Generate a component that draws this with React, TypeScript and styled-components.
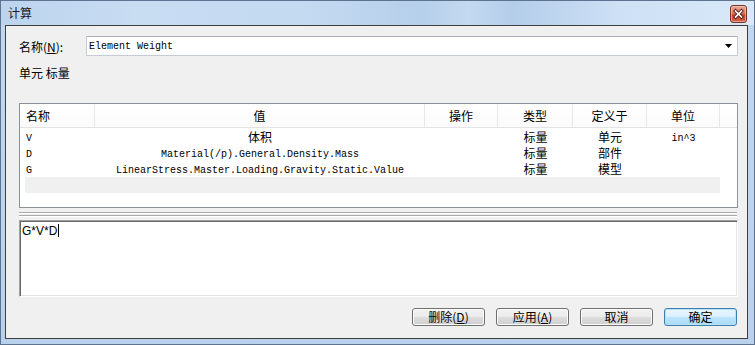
import styled, { createGlobalStyle } from 'styled-components';

const GlobalStyle = createGlobalStyle`
  * { box-sizing: border-box; }
  html, body { margin: 0; padding: 0; background: #fff; }
  body {
    font-family: "Noto Sans CJK SC", "Liberation Sans", sans-serif;
    font-size: 12px;
    color: #000;
  }
`;

type Row = {
  name: string;
  value: string;
  valueMono: boolean;
  op: string;
  kind: string;
  scope: string;
  unit: string;
};

const rows: Row[] = [
  { name: 'V', value: '体积', valueMono: false, op: '', kind: '标量', scope: '单元', unit: 'in^3' },
  { name: 'D', value: 'Material(/p).General.Density.Mass', valueMono: true, op: '', kind: '标量', scope: '部件', unit: '' },
  { name: 'G', value: 'LinearStress.Master.Loading.Gravity.Static.Value', valueMono: true, op: '', kind: '标量', scope: '模型', unit: '' },
];

const headers = ['名称', '值', '操作', '类型', '定义于', '单位'];

const App = () => {
  return (
    <>
      <GlobalStyle />
      <Window>
        <TitleBar>
          <Title>计算</Title>
          <CloseButton>
            <svg width="15" height="16" viewBox="0 0 15 16">
              <path d="M4.5 5 L10.5 11 M10.5 5 L4.5 11" stroke="#5a1a10" strokeWidth="3.4" strokeLinecap="square" />
              <path d="M4.5 5 L10.5 11 M10.5 5 L4.5 11" stroke="#fff" strokeWidth="1.6" strokeLinecap="square" />
            </svg>
          </CloseButton>
        </TitleBar>
        <Content>
          <NameRow>
            <Label>
              名称(<Key>N</Key>):
            </Label>
            <Combo>
              <ComboText>Element Weight</ComboText>
              <svg width="7" height="4" viewBox="0 0 7 4">
                <path d="M0 0 H7 L3.5 4 Z" fill="#000" />
              </svg>
            </Combo>
          </NameRow>
          <Info>单元 标量</Info>
          <Table>
            <Header>
              {headers.map((h, i) => (
                <HeaderCell key={h} $left={i === 0}>
                  {h}
                </HeaderCell>
              ))}
              <HeaderCell $left={false} />
            </Header>
            <Body>
              {rows.map((r) => (
                <BodyRow key={r.name} $shade={false}>
                  <Cell $mono $left>
                    {r.name}
                  </Cell>
                  <Cell $mono={r.valueMono} $left={false}>
                    {r.value}
                  </Cell>
                  <Cell $mono={false} $left={false}>
                    {r.op}
                  </Cell>
                  <Cell $mono={false} $left={false}>
                    {r.kind}
                  </Cell>
                  <Cell $mono={false} $left={false}>
                    {r.scope}
                  </Cell>
                  <Cell $mono $left={false}>
                    {r.unit}
                  </Cell>
                </BodyRow>
              ))}
              <BodyRow $shade />
            </Body>
          </Table>
          <Splitter>
            <SplitLine />
            <SplitLine />
          </Splitter>
          <Editor>
            G*V*D
            <Caret />
          </Editor>
          <ButtonRow>
            <Button $primary={false}>
              删除(<Key>D</Key>)
            </Button>
            <Button $primary={false}>
              应用(<Key>A</Key>)
            </Button>
            <Button $primary={false}>取消</Button>
            <Button $primary>确定</Button>
          </ButtonRow>
        </Content>
      </Window>
    </>
  );
};

const Window = styled.div`
  display: flex;
  flex-direction: column;
  width: 755px;
  height: 345px;
  border: 1px solid #5d7390;
  background: linear-gradient(180deg, #c2d8f0 0%, #b9d1ec 100%);
`;

const TitleBar = styled.div`
  display: flex;
  justify-content: space-between;
  align-items: flex-start;
  height: 24px;
  padding: 0 7px 0 7px;
  background: linear-gradient(
    90deg,
    #bcd4ee 0%,
    #c8dcf2 18%,
    #c4daf1 40%,
    #b6cfea 56%,
    #c3d9f0 62%,
    #b4cde9 68%,
    #cde0f5 82%,
    #d9e9f9 100%
  );
`;

const Title = styled.span`
  line-height: 24px;
  font-size: 12px;
  color: #1a1a1a;
`;

const CloseButton = styled.div`
  display: flex;
  align-items: center;
  justify-content: center;
  width: 17px;
  height: 18px;
  margin-top: 4px;
  border: 1px solid #7a3326;
  border-radius: 3px;
  background: linear-gradient(180deg, #e7a797 0%, #d67a63 45%, #c2462c 55%, #d0654a 100%);
  box-shadow: inset 0 0 0 1px rgba(255, 220, 210, 0.5);
`;

const Content = styled.div`
  display: flex;
  flex-direction: column;
  flex: 1;
  margin: 0 6px 5px 4px;
  padding: 10px 9px 12px 13px;
  border: 1px solid #3f3f3f;
  background: #f0f0f0;
`;

const NameRow = styled.div`
  display: flex;
  align-items: center;
  height: 20px;
`;

const Label = styled.span`
  width: 67px;
  flex-shrink: 0;
`;

const Key = styled.span`
  text-decoration: underline;
`;

const Combo = styled.div`
  display: flex;
  align-items: center;
  justify-content: space-between;
  flex: 1;
  height: 20px;
  padding: 0 5px 0 2px;
  border: 1px solid #c6cad3;
  border-top-color: #a7aab2;
  background: #fff;
`;

const ComboText = styled.span`
  font-family: "Liberation Mono", monospace;
  font-size: 10px;
`;

const Info = styled.div`
  margin-top: 10px;
  height: 14px;
  line-height: 14px;
`;

const Table = styled.div`
  display: flex;
  flex-direction: column;
  margin-top: 23px;
  height: 105px;
  border: 1px solid #8c9097;
  background: #fff;
`;

const Header = styled.div`
  display: grid;
  grid-template-columns: 75px 330px 73px 75px 74px 73px 1fr;
  height: 24px;
  border-bottom: 1px solid #e3e3e3;
  background: linear-gradient(180deg, #ffffff 0%, #fbfbfc 100%);
`;

const HeaderCell = styled.div<{ $left: boolean }>`
  line-height: 23px;
  text-align: ${({ $left }) => ($left ? 'left' : 'center')};
  padding-left: ${({ $left }) => ($left ? '6px' : '0')};
  border-right: 1px solid #e5e9ee;
  &:last-child {
    border-right: none;
  }
`;

const Body = styled.div`
  display: flex;
  flex-direction: column;
  padding: 1px 0 0 5px;
`;

const BodyRow = styled.div<{ $shade: boolean }>`
  display: grid;
  grid-template-columns: 70px 330px 73px 75px 74px 73px;
  width: 695px;
  height: 16px;
  line-height: 16px;
  background: ${({ $shade }) => ($shade ? '#f0f0f0' : '#fff')};
`;

const Cell = styled.div<{ $mono: boolean; $left: boolean }>`
  white-space: nowrap;
  text-align: ${({ $left }) => ($left ? 'left' : 'center')};
  padding-left: ${({ $left }) => ($left ? '1px' : '0')};
  padding-top: ${({ $mono }) => ($mono ? '2px' : '0')};
  font-family: ${({ $mono }) =>
    $mono ? '"Liberation Mono", monospace' : '"Noto Sans CJK SC", sans-serif'};
  font-size: ${({ $mono }) => ($mono ? '10px' : '12px')};
`;

const Splitter = styled.div`
  display: flex;
  flex-direction: column;
  gap: 1px;
  height: 12px;
  padding-top: 4px;
`;

const SplitLine = styled.div`
  height: 2px;
  margin-right: 1px;
  border-top: 1px solid #a9a9a9;
  border-bottom: 1px solid #fff;
`;

const Editor = styled.div`
  height: 77px;
  padding: 3px 1px 1px 2px;
  border: 1px solid;
  border-color: #a0a0a0 #ffffff #ffffff #a0a0a0;
  box-shadow: inset 1px 1px 0 #696969, inset -1px -1px 0 #e3e3e3;
  background: #fff;
  font-family: "Liberation Sans", Arial, sans-serif;
  font-size: 12px;
  line-height: 14px;
`;

const Caret = styled.span`
  display: inline-block;
  width: 1px;
  height: 13px;
  margin-left: 1px;
  vertical-align: -2px;
  background: #000;
`;

const ButtonRow = styled.div`
  display: flex;
  justify-content: flex-end;
  gap: 11px;
  margin-top: 11px;
  padding-right: 1px;
`;

const Button = styled.div<{ $primary: boolean }>`
  display: flex;
  align-items: center;
  justify-content: center;
  width: 73px;
  height: 18px;
  border: 1px solid ${({ $primary }) => ($primary ? '#3c7fb1' : '#707070')};
  border-radius: 3px;
  background: ${({ $primary }) =>
    $primary
      ? 'linear-gradient(180deg, #eaf6fd 0%, #d9f0fc 50%, #bee6fd 50%, #a7d9f5 100%)'
      : 'linear-gradient(180deg, #f2f2f2 0%, #ebebeb 50%, #dddddd 50%, #cfcfcf 100%)'};
  box-shadow: inset 0 0 0 1px ${({ $primary }) => ($primary ? '#b9e2fa' : '#fcfcfc')};
  font-size: 12px;
  line-height: 16px;
`;

export default App;
